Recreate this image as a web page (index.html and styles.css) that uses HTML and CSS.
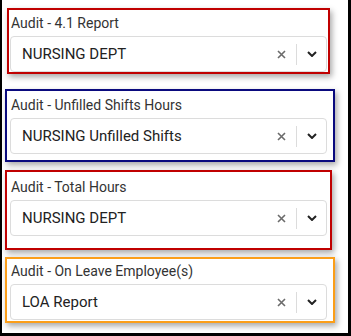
FILE: index.html
```html
<!DOCTYPE html>
<html lang="en">
    <head>
        <meta charset="UTF-8" />
        <meta name="viewport" content="width=device-width, initial-scale=1.0" />
        <title>Audit Reports</title>
        <link rel="stylesheet" href="styles.css">
    </head>
    <body>
        <div class="frame">
            <div class="card card-first card-red">
                <div class="label">Audit - 4.1 Report</div>
                <div class="select">
                    <span class="value">NURSING DEPT</span>
                    <svg class="clear" width="9" height="9" viewBox="0 0 9 9"><path d="M1 1L8 8M8 1L1 8" /></svg>
                    <span class="sep"></span>
                    <svg class="chevron" width="10" height="6" viewBox="0 0 10 6"><path d="M1 1L5 5L9 1" /></svg>
                </div>
            </div>
            <div class="card card-blue">
                <div class="label">Audit - Unfilled Shifts Hours</div>
                <div class="select">
                    <span class="value">NURSING Unfilled Shifts</span>
                    <svg class="clear" width="9" height="9" viewBox="0 0 9 9"><path d="M1 1L8 8M8 1L1 8" /></svg>
                    <span class="sep"></span>
                    <svg class="chevron" width="10" height="6" viewBox="0 0 10 6"><path d="M1 1L5 5L9 1" /></svg>
                </div>
            </div>
            <div class="card card-total card-red">
                <div class="label">Audit - Total Hours</div>
                <div class="select">
                    <span class="value">NURSING DEPT</span>
                    <svg class="clear" width="9" height="9" viewBox="0 0 9 9"><path d="M1 1L8 8M8 1L1 8" /></svg>
                    <span class="sep"></span>
                    <svg class="chevron" width="10" height="6" viewBox="0 0 10 6"><path d="M1 1L5 5L9 1" /></svg>
                </div>
            </div>
            <div class="card card-orange">
                <div class="label">Audit - On Leave Employee(s)</div>
                <div class="select">
                    <span class="value">LOA Report</span>
                    <svg class="clear" width="9" height="9" viewBox="0 0 9 9"><path d="M1 1L8 8M8 1L1 8" /></svg>
                    <span class="sep"></span>
                    <svg class="chevron" width="10" height="6" viewBox="0 0 10 6"><path d="M1 1L5 5L9 1" /></svg>
                </div>
            </div>
        </div>
    </body>
</html>
```
FILE: styles.css
```css
* {
    box-sizing: border-box;
}
body {
    margin: 0;
    background-color: white;
    font-family: Roboto, "Liberation Sans", sans-serif;
}
.frame {
    width: 351px;
    height: 336px;
    border-left: 2px solid black;
    border-right: 3px solid black;
    border-bottom: 3px solid black;
    padding-top: 8px;
    display: flex;
    flex-direction: column;
    align-items: flex-start;
}
.card {
    border: 2px solid;
    background-color: white;
    box-shadow: 2px 3px 6px rgba(0, 0, 0, 0.35);
    margin-left: 3px;
}
.card-red {
    border-color: #c00000;
}
.card-blue {
    border-color: #0a0a7e;
}
.card-orange {
    border-color: #fb9e19;
}

.card-first {
    margin-left: 5px;
    padding: 3px 1px 0 1px;
    margin-bottom: 15px;
}
.card-blue {
    padding: 4px 6px 6px 3px;
    margin-bottom: 8px;
}
.card-total {
    padding: 5px 3px 12px 3px;
    margin-bottom: 7px;
}
.card-orange {
    padding: 2px 6px 1px 3px;
}

.label {
    font-size: 14px;
    line-height: 20px;
    color: #333;
    padding-left: 1px;
    margin-bottom: 3px;
}
.select {
    width: 317px;
    height: 36px;
    border: 1px solid #dcdcdc;
    border-radius: 4px;
    display: flex;
    align-items: center;
    padding: 0 9px 0 11px;
}
.value {
    flex: 1;
    font-size: 15px;
    color: #222;
}
.clear path {
    stroke: #6b6b6b;
    stroke-width: 1.6;
    fill: none;
}
.sep {
    width: 1px;
    height: 21px;
    background-color: #dcdcdc;
    margin: 0 10px;
}
.chevron path {
    stroke: #222;
    stroke-width: 2;
    fill: none;
}
```
